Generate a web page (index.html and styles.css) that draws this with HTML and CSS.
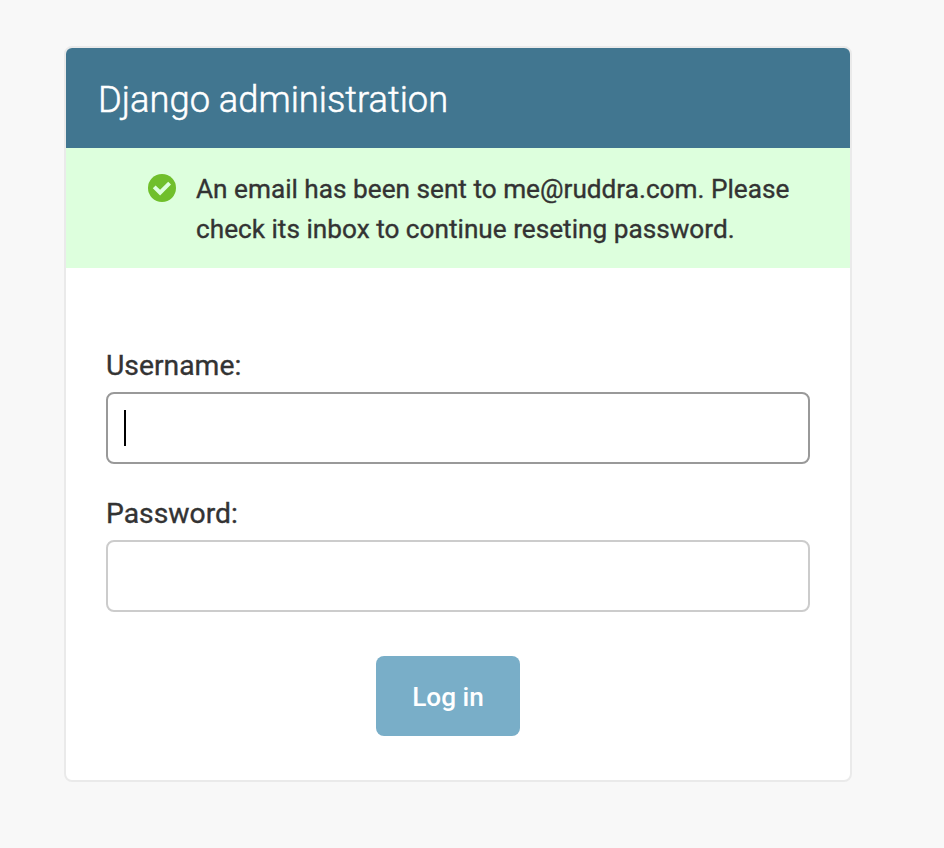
FILE: index.html
```html
<!DOCTYPE html>
<html lang="en">
<head>
<meta charset="utf-8">
<title>Log in | Django site admin</title>
<link rel="stylesheet" href="styles.css">
</head>
<body>
<main class="container">
  <header class="header"><h1>Django administration</h1></header>
  <div class="message">
    <svg class="message-icon" viewBox="0 0 28 28" aria-hidden="true"><circle cx="14" cy="14" r="14"/><path d="M4.8 14.2L7.6 11.4L12.1 15.8L20.2 7.8L23 10.6L12.1 21.6Z"/></svg>
    <p>An email has been sent to me@ruddra.com. Please check its inbox to continue reseting password.</p>
  </div>
  <form class="form">
    <div class="row">
      <label for="username">Username:</label>
      <div class="field focused"><span class="caret"></span><input id="username" type="text"></div>
    </div>
    <div class="row">
      <label for="password">Password:</label>
      <div class="field"><input id="password" type="password"></div>
    </div>
    <button class="submit" type="button">Log in</button>
  </form>
</main>
</body>
</html>
```
FILE: styles.css
```css
* { box-sizing: border-box; }
body {
  margin: 0;
  padding: 46px 0 0 64px;
  background: #f8f8f8;
  color: #333;
  font-family: Roboto, sans-serif;
}
.container {
  width: 788px;
  height: 736px;
  border: 2px solid #eaeaea;
  border-radius: 8px;
  background: #fff;
  overflow: hidden;
}
.header {
  height: 100px;
  padding: 0 32px;
  background: #417690;
  color: #fff;
}
.header h1 {
  margin: 0;
  font-size: 36.3px;
  font-weight: 300;
  line-height: 104px;
  white-space: nowrap;
  -webkit-text-stroke: 0.5px;
}
.message {
  display: flex;
  height: 120px;
  padding: 20px 50px 20px 82px;
  gap: 20px;
  background: #dfd;
}
.message-icon {
  flex: none;
  width: 28px;
  height: 28px;
  margin-top: 6px;
  fill: #70bf2b;
}
.message-icon path { fill: #dfd; }
.message p {
  margin: 1px 0 0;
  font-size: 26.2px;
  line-height: 40px;
  -webkit-text-stroke: 0.35px;
}
.form { padding: 80px 40px 0; }
.row { margin-bottom: 32px; }
.row label {
  display: block;
  height: 44px;
  font-size: 28.3px;
  line-height: 36px;
  -webkit-text-stroke: 0.35px;
}
.field {
  display: flex;
  align-items: center;
  width: 704px;
  height: 72px;
  padding: 0 16px;
  border: 2px solid #999;
  border-color: #ccc;
  border-radius: 8px;
}
.focused { border-color: #999; }
.caret {
  width: 2px;
  height: 36px;
  background: #000;
}
.field input {
  flex: 1;
  min-width: 0;
  padding: 0;
  border: 0;
  outline: 0;
  background: transparent;
  font: 28px Roboto, sans-serif;
}
.submit {
  display: block;
  width: 144px;
  height: 80px;
  margin: 44px 0 0 270px;
  padding: 2px 0 0;
  border: 0;
  border-radius: 8px;
  background: #79aec8;
  color: #fff;
  font: 500 26.2px Roboto, sans-serif;
}
```
